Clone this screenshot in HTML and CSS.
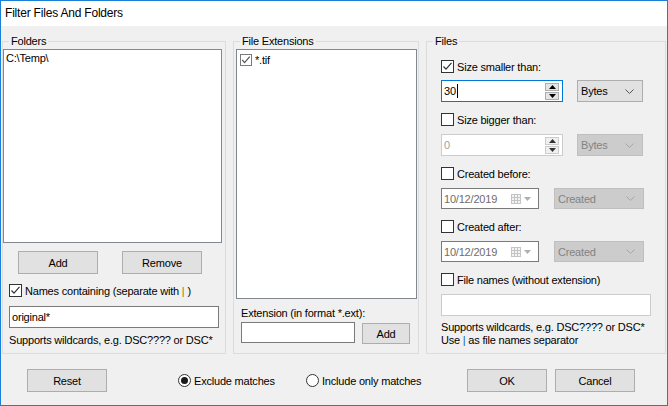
FILE: index.html
```html
<!DOCTYPE html>
<html lang="en">

<head>
    <meta charset="UTF-8">
    <title>Filter Files And Folders</title>
    <link rel="stylesheet" href="styles.css">
</head>

<body>
    <div class="window">
        <div class="titlebar">Filter Files And Folders</div>

        <div class="client">
            <div class="groups">
                <!-- 폴더 -->
                <fieldset class="group group-folders">
                    <legend>Folders</legend>
                    <div class="listbox folders-list">
                        <div class="list-item">C:\Temp\</div>
                    </div>
                    <div class="btn-row">
                        <button class="btn">Add</button>
                        <button class="btn">Remove</button>
                    </div>
                    <label class="check-row names-check">
                        <span class="checkbox checked">
                            <svg viewBox="0 0 11 11"><polyline points="1.5,5.5 4,8.2 9.5,1.8" /></svg>
                        </span>
                        <span>Names containing (separate with <span class="pipe-orange">|</span> )</span>
                    </label>
                    <div class="textbox names-box">original*</div>
                    <div class="hint names-hint">Supports wildcards, e.g. DSC???? or DSC*</div>
                </fieldset>

                <!-- 확장자 -->
                <fieldset class="group group-ext">
                    <legend>File Extensions</legend>
                    <div class="listbox ext-list">
                        <div class="ext-item">
                            <span class="checkbox small checked">
                                <svg viewBox="0 0 10 10"><polyline points="1.3,5 3.6,7.6 8.7,1.6" /></svg>
                            </span>
                            <span>*.tif</span>
                        </div>
                    </div>
                    <div class="ext-label">Extension (in format *.ext):</div>
                    <div class="ext-row">
                        <div class="textbox ext-box"></div>
                        <button class="btn btn-small">Add</button>
                    </div>
                </fieldset>

                <!-- 파일 -->
                <fieldset class="group group-files">
                    <legend>Files</legend>

                    <label class="check-row first">
                        <span class="checkbox checked">
                            <svg viewBox="0 0 11 11"><polyline points="1.5,5.5 4,8.2 9.5,1.8" /></svg>
                        </span>
                        <span>Size smaller than:</span>
                    </label>
                    <div class="field-row">
                        <div class="spin focused">
                            <span class="spin-text">30<span class="caret"></span></span>
                            <span class="spin-btns">
                                <span class="spin-btn"><svg viewBox="0 0 7 4"><polygon points="0,4 3.5,0 7,4" /></svg></span>
                                <span class="spin-btn"><svg viewBox="0 0 7 4"><polygon points="0,0 7,0 3.5,4" /></svg></span>
                            </span>
                        </div>
                        <div class="combo unit">
                            <span>Bytes</span>
                            <svg class="chevron" viewBox="0 0 9 5"><polyline points="0.5,0.5 4.5,4.5 8.5,0.5" /></svg>
                        </div>
                    </div>

                    <label class="check-row">
                        <span class="checkbox"></span>
                        <span>Size bigger than:</span>
                    </label>
                    <div class="field-row">
                        <div class="spin disabled">
                            <span class="spin-text">0</span>
                            <span class="spin-btns">
                                <span class="spin-btn"><svg viewBox="0 0 7 4"><polygon points="0,4 3.5,0 7,4" /></svg></span>
                                <span class="spin-btn"><svg viewBox="0 0 7 4"><polygon points="0,0 7,0 3.5,4" /></svg></span>
                            </span>
                        </div>
                        <div class="combo unit disabled">
                            <span>Bytes</span>
                            <svg class="chevron" viewBox="0 0 9 5"><polyline points="0.5,0.5 4.5,4.5 8.5,0.5" /></svg>
                        </div>
                    </div>

                    <label class="check-row">
                        <span class="checkbox"></span>
                        <span>Created before:</span>
                    </label>
                    <div class="field-row date-row">
                        <div class="datebox">
                            <span>10/12/2019</span>
                            <svg class="cal" viewBox="0 0 10 10">
                                <rect x="0.5" y="0.5" width="9" height="9" />
                                <path d="M0.5 3.5H9.5M0.5 6.5H9.5M3.5 0.5V9.5M6.5 0.5V9.5" />
                            </svg>
                            <svg class="drop" viewBox="0 0 7 4"><polygon points="0,0 7,0 3.5,4" /></svg>
                        </div>
                        <div class="combo kind disabled">
                            <span>Created</span>
                            <svg class="chevron" viewBox="0 0 9 5"><polyline points="0.5,0.5 4.5,4.5 8.5,0.5" /></svg>
                        </div>
                    </div>

                    <label class="check-row">
                        <span class="checkbox"></span>
                        <span>Created after:</span>
                    </label>
                    <div class="field-row date-row">
                        <div class="datebox">
                            <span>10/12/2019</span>
                            <svg class="cal" viewBox="0 0 10 10">
                                <rect x="0.5" y="0.5" width="9" height="9" />
                                <path d="M0.5 3.5H9.5M0.5 6.5H9.5M3.5 0.5V9.5M6.5 0.5V9.5" />
                            </svg>
                            <svg class="drop" viewBox="0 0 7 4"><polygon points="0,0 7,0 3.5,4" /></svg>
                        </div>
                        <div class="combo kind disabled">
                            <span>Created</span>
                            <svg class="chevron" viewBox="0 0 9 5"><polyline points="0.5,0.5 4.5,4.5 8.5,0.5" /></svg>
                        </div>
                    </div>

                    <label class="check-row">
                        <span class="checkbox"></span>
                        <span>File names (without extension)</span>
                    </label>
                    <div class="textbox disabled-box files-box"></div>
                    <div class="hint files-hint">
                        Supports wildcards, e.g. DSC???? or DSC*<br>
                        Use <span class="pipe-blue">|</span> as file names separator
                    </div>
                </fieldset>
            </div>

            <div class="footer">
                <button class="btn">Reset</button>
                <label class="radio-row exclude">
                    <span class="radio checked"></span>
                    <span>Exclude matches</span>
                </label>
                <label class="radio-row include">
                    <span class="radio"></span>
                    <span>Include only matches</span>
                </label>
                <button class="btn">OK</button>
                <button class="btn cancel">Cancel</button>
            </div>
        </div>
    </div>
</body>

</html>
```

FILE: styles.css
```css
* {
    margin: 0;
    padding: 0;
    box-sizing: border-box;
}

body {
    font-family: 'Liberation Sans', Arial, sans-serif;
    font-size: 11px;
    letter-spacing: -0.2px;
    color: #000;
    background: #f0f0f0;
}

.window {
    width: 668px;
    height: 406px;
    border: 1px solid #1a7fd6;
    display: flex;
    flex-direction: column;
}

.titlebar {
    height: 25px;
    line-height: 25px;
    background: white;
    padding-left: 4px;
    font-size: 12px;
}

.client {
    flex: 1;
    background: #f0f0f0;
    padding: 8px 1px 0 1px;
}

.groups {
    display: flex;
    gap: 7px;
    height: 320px;
}

/* 그룹 박스 */
.group {
    border: 1px solid #dcdcdc;
    min-width: 0;
    display: flex;
    flex-direction: column;
    align-items: flex-start;
}

.group legend {
    margin-left: 6px;
    padding: 0 2px;
    line-height: 14px;
    font-size: 11px;
}

.group-folders { width: 224px; }
.group-ext { width: 186px; }
.group-files { width: 240px; }

.listbox {
    background: white;
    border: 1px solid #828790;
    margin-top: 1px;
}

.folders-list {
    width: 219px;
    height: 194px;
}

.list-item {
    padding: 1px 0 0 2px;
    line-height: 14px;
}

.btn-row {
    display: flex;
    gap: 24px;
    margin: 8px 0 0 15px;
}

.btn {
    width: 80px;
    height: 23px;
    background: #e1e1e1;
    border: 1px solid #adadad;
    font-family: inherit;
    font-size: 11px;
    letter-spacing: inherit;
    color: #000;
}

.btn-small {
    width: 48px;
    height: 21px;
    margin-top: 1px;
}

/* 체크박스 */
.check-row {
    display: flex;
    align-items: center;
    height: 15px;
    margin: 10px 0 0 14px;
}

.names-check {
    margin: 9px 0 0 6px;
}

.check-row .checkbox {
    margin-right: 3px;
}

.checkbox {
    width: 13px;
    height: 13px;
    border: 1px solid #333;
    background: white;
    display: inline-flex;
    flex-shrink: 0;
}

.checkbox svg {
    width: 11px;
    height: 11px;
    fill: none;
    stroke: #333;
    stroke-width: 1.2;
}

.checkbox.small {
    width: 12px;
    height: 12px;
    border-color: #7a7a7a;
    margin-right: 3px;
}

.checkbox.small svg {
    width: 10px;
    height: 10px;
    stroke: #555;
}

.pipe-orange {
    color: #b86a00;
}

.pipe-blue {
    color: #1560c0;
}

.textbox {
    background: white;
    border: 1px solid #7a7a7a;
    height: 22px;
    line-height: 20px;
    padding-left: 2px;
}

.names-box {
    width: 210px;
    margin: 8px 0 0 6px;
}

.hint {
    line-height: 14px;
}

.names-hint {
    margin: 5px 0 0 6px;
}

/* 확장자 */
.ext-list {
    width: 181px;
    height: 250px;
    margin-left: 2px;
}

.ext-item {
    display: flex;
    align-items: center;
    padding: 3px 0 0 3px;
    line-height: 14px;
}

.ext-label {
    margin: 7px 0 0 7px;
    line-height: 14px;
}

.ext-row {
    display: flex;
    gap: 7px;
    margin: 2px 0 0 7px;
}

.ext-box {
    width: 114px;
    height: 21px;
}

/* 파일 */
.check-row.first {
    margin-top: 11px;
}

.field-row {
    display: flex;
    gap: 14px;
    margin: 6px 0 0 14px;
}

.check-row + .field-row {
    margin-top: 7px;
}

.group-files > .check-row.first + .field-row {
    margin-top: 6px;
}

.spin {
    width: 122px;
    height: 22px;
    background: white;
    border: 1px solid #7a7a7a;
    display: flex;
    align-items: center;
    justify-content: space-between;
    padding: 0 3px 0 2px;
}

.spin.focused {
    border-color: #0078d7;
}

.spin.disabled {
    border-color: #cccccc;
    color: #a0a0a0;
}

.caret {
    display: inline-block;
    width: 1px;
    height: 14px;
    background: #000;
    vertical-align: -3px;
    margin-left: 1px;
}

.spin-btns {
    display: flex;
    flex-direction: column;
    gap: 1px;
}

.spin-btn {
    width: 14px;
    height: 8px;
    background: #e5e5e5;
    border: 1px solid #adadad;
    display: flex;
    align-items: center;
    justify-content: center;
}

.spin-btn svg {
    width: 7px;
    height: 4px;
    fill: #000;
}

.spin.disabled .spin-btn {
    background: #f0f0f0;
    border-color: #cccccc;
}

.spin.disabled .spin-btn svg {
    fill: #333;
}

.combo {
    height: 22px;
    background: #e1e1e1;
    border: 1px solid #adadad;
    display: flex;
    align-items: center;
    justify-content: space-between;
    padding: 0 8px 0 3px;
}

.combo.unit {
    width: 66px;
}

.combo.kind {
    width: 90px;
    height: 21px;
}

.combo.disabled {
    background: #cccccc;
    border-color: #bfbfbf;
    color: #838383;
}

.chevron {
    width: 9px;
    height: 5px;
    fill: none;
    stroke: #555;
}

.combo.disabled .chevron {
    stroke: #a6a6a6;
}

.date-row {
    gap: 15px;
}

.datebox {
    width: 98px;
    height: 21px;
    background: white;
    border: 1px solid #7a7a7a;
    display: flex;
    align-items: center;
    padding-left: 2px;
    color: #6d6d6d;
}

.datebox span {
    flex: 1;
}

.cal {
    width: 10px;
    height: 10px;
    fill: #f4f4f4;
    stroke: #c4c4c4;
    margin-right: 3px;
}

.drop {
    width: 7px;
    height: 4px;
    fill: #b0b0b0;
    margin-right: 7px;
}

.files-box {
    width: 210px;
    margin: 7px 0 0 14px;
    border-color: #cccccc;
}

.files-hint {
    line-height: 13px;
    margin: 5px 0 0 14px;
}

/* 하단 */
.footer {
    display: flex;
    align-items: center;
    margin-top: 15px;
    padding-left: 25px;
}

.radio-row {
    display: flex;
    align-items: center;
    height: 23px;
}

.radio-row .radio {
    margin-right: 3px;
}

.exclude {
    margin-left: 71px;
    width: 128px;
}

.include {
    width: 161px;
}

.radio {
    width: 13px;
    height: 13px;
    border: 1px solid #333;
    border-radius: 50%;
    background: white;
    display: inline-flex;
    align-items: center;
    justify-content: center;
}

.radio.checked::after {
    content: '';
    width: 7px;
    height: 7px;
    border-radius: 50%;
    background: #1a1a1a;
}

.cancel {
    margin-left: 8px;
}
```
